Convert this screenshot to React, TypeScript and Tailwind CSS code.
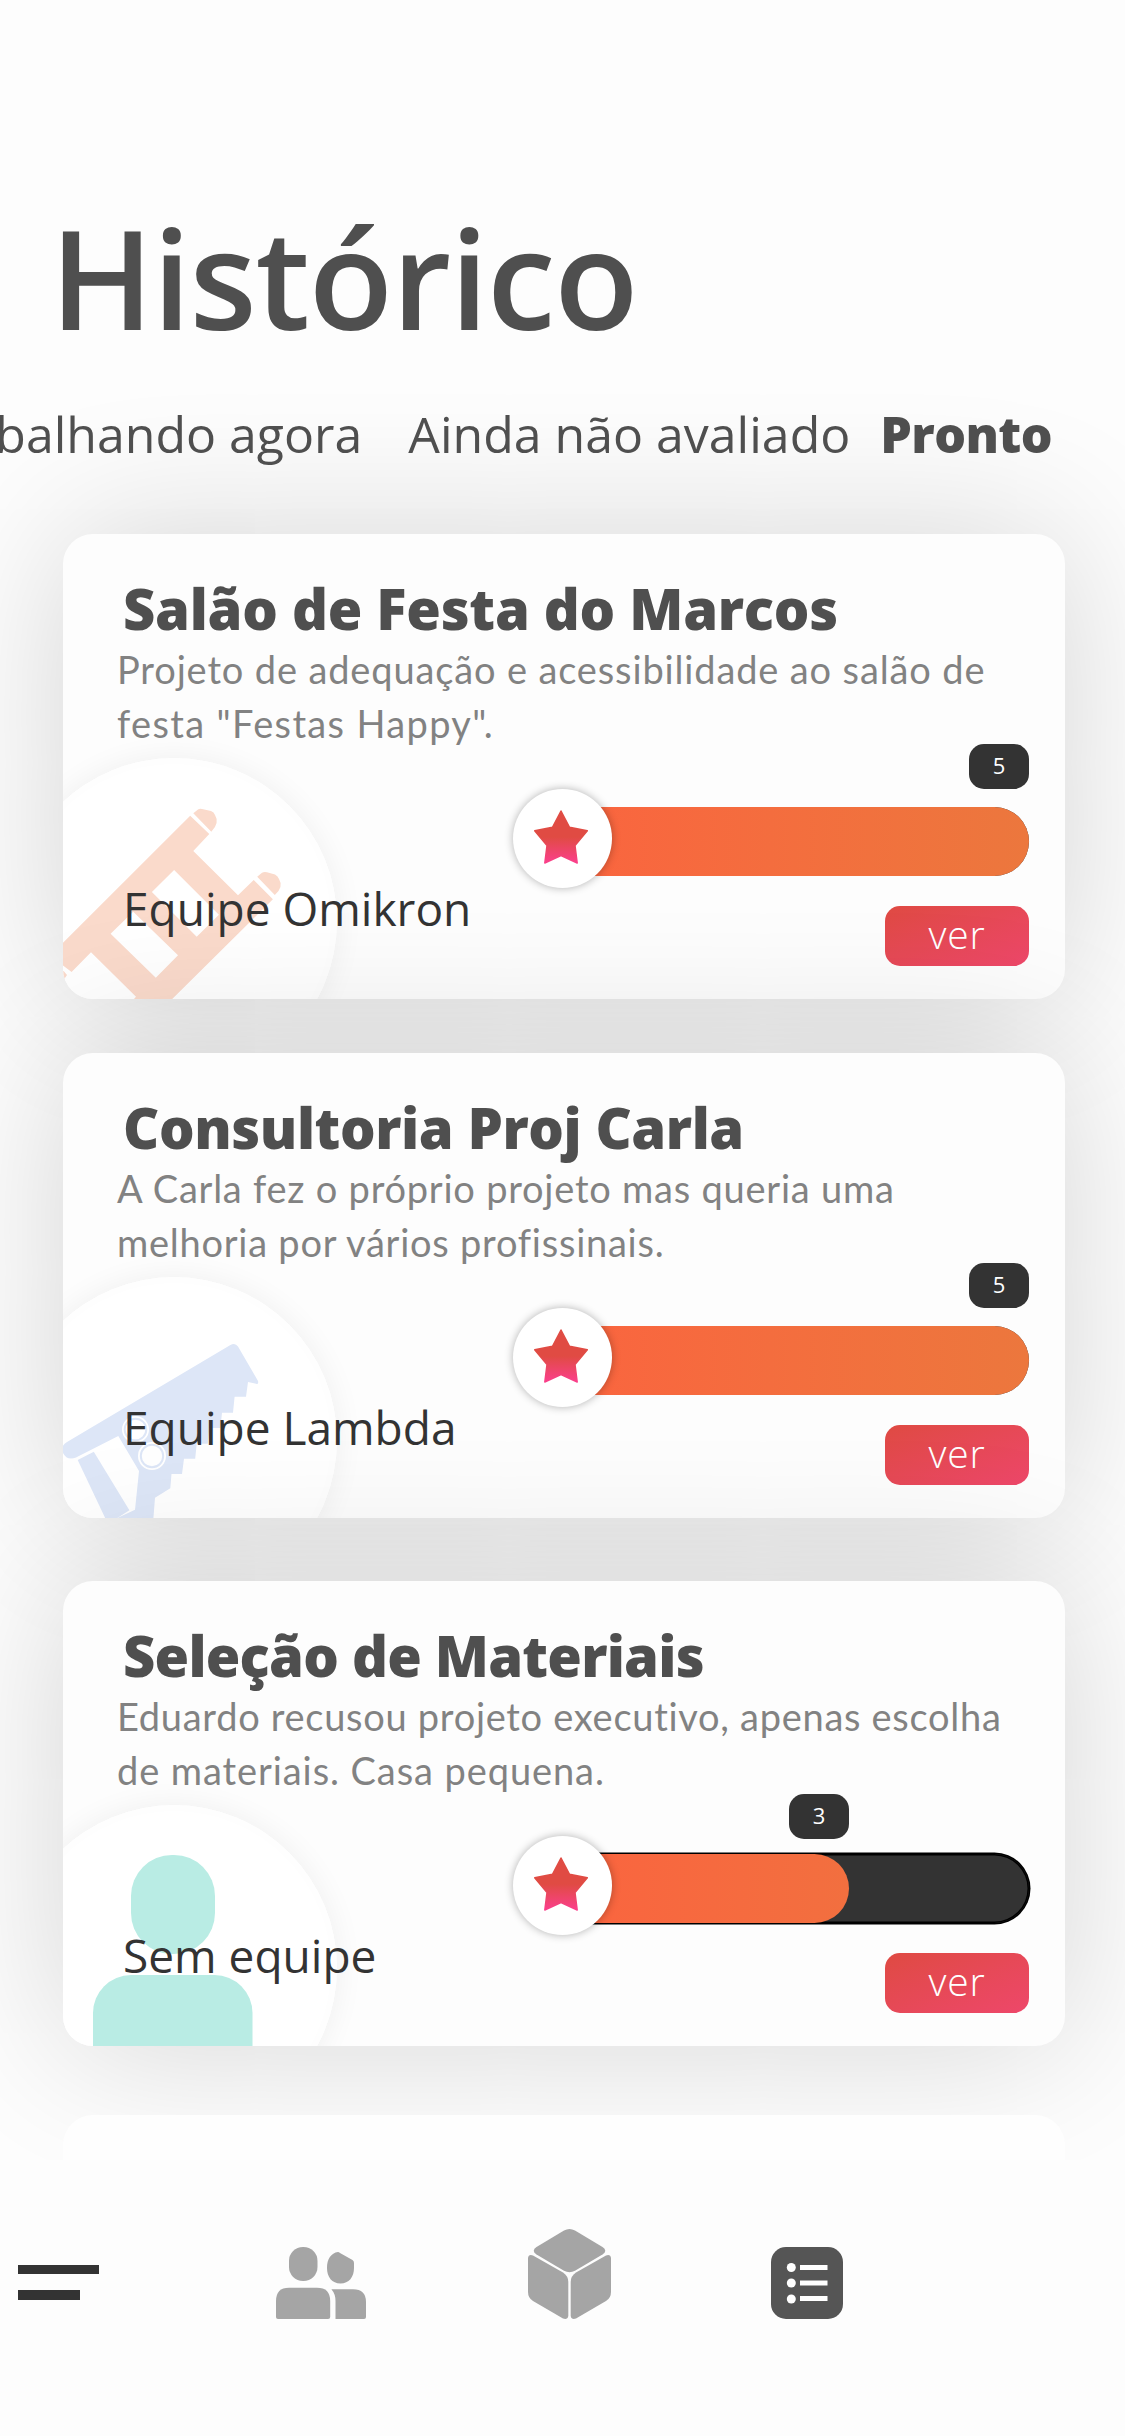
import clsx from 'clsx';
import { ReactNode } from 'react';

type Project = {
	id: number;
	title: string;
	titleStyle: string;
	description: { text: string; style: string }[];
	team: string;
	rating: number;
	icon: ReactNode;
	spacing: string;
};

const Ladder = () => (
	<svg viewBox="11 758 326 326" className="w-full h-full" fill="#fadacb">
		<path
			fillRule="evenodd"
			d="M190.2 815.7L209.3 834L193.3 851L238 895.3L253.7 880L272.9 899.3L151 1020L134 999L136 996.7L91 952.3L71.6 972L50 955.7ZM174.1 870L151.9 892L196.7 936.7L218.9 914.7ZM133.2 911.7L110.6 933.7L155.8 977.7L178 955.3Z"
		/>
		<path d="M193.3 813.3L198 809.500Q199.500 808.500 202 809L211 811Q214 812 215 815Q220 823 211.300 831.700Z" />
		<path d="M257.200 876.700L262 872.700Q264 871.500 267 872.200L275 874.500Q278 876 279 879Q284 887 274.800 895Z" />
		<path d="M50 955L67 975L60 985L40 970Z" />
	</svg>
);

const Saw = () => (
	<svg viewBox="11 1277 326 326" className="w-full h-full" fill="#dde6f7">
		<path d="M230 1345.300Q235 1342 238 1346.500L258 1381Q259 1385 255 1383.500L248 1382L246 1396.700H234.600L233 1412.700H222L220.400 1428H209.300L207.800 1443.700H196.700L195.200 1458.700H184L182 1474H171.500L170.300 1488.300L155 1497.700L152.500 1530H100L111 1521L135 1509.700L139 1471L118.300 1436L76 1457.500Q67 1461 63 1453Q60 1446 67 1442Z" />
		<path d="M77.700 1460L93.800 1451.700L129.400 1510.300L108 1524Z" />
		<g stroke="#dde6f7" strokeWidth="2" fill="#fff">
			<circle cx="135.500" cy="1429.500" r="13.500" stroke="none" />
			<circle cx="135.500" cy="1429.500" r="10.800" />
			<circle cx="152" cy="1456" r="14" stroke="none" />
			<circle cx="152" cy="1456" r="11.200" />
		</g>
	</svg>
);

const Person = () => (
	<svg viewBox="11 1805 326 326" className="w-full h-full" fill="#b9ece4">
		<rect x="131" y="1855" width="84" height="99" rx="41" />
		<rect x="93" y="1975" width="159.500" height="110" rx="38" />
	</svg>
);

const Star = () => (
	<svg viewBox="533 809 56 56" className="w-14 h-14">
		<defs>
			<linearGradient id="star" x1="0" y1="0" x2="0" y2="1">
				<stop offset="0.5" stopColor="#e04b43" />
				<stop offset="1" stopColor="#fb3f8c" />
			</linearGradient>
		</defs>
		<path
			fill="url(#star)"
			stroke="url(#star)"
			strokeWidth="1.500"
			strokeLinejoin="round"
			d="M561 811L569.500 827.300L587.300 830.800L575 845.500L577.200 863L561 855.500L544.800 863L547 845.500L534.700 830.800L552.500 827.300Z"
		/>
	</svg>
);

const projects: Project[] = [
	{
		id: 1,
		title: 'Salão de Festa do Marcos',
		titleStyle: 'tracking-[-0.25px]',
		description: [
			{
				text: 'Projeto de adequação e acessibilidade ao salão de',
				style: 'tracking-[0.86px]',
			},
			{ text: 'festa "Festas Happy".', style: 'tracking-[1.35px]' },
		],
		team: 'Equipe Omikron',
		rating: 5,
		icon: <Ladder />,
		spacing: 'mt-[70px]',
	},
	{
		id: 2,
		title: 'Consultoria Proj Carla',
		titleStyle: 'tracking-[-0.42px]',
		description: [
			{
				text: 'A Carla fez o próprio projeto mas queria uma',
				style: 'tracking-[0.77px]',
			},
			{
				text: 'melhoria por vários profissinais.',
				style: 'tracking-[0.75px]',
			},
		],
		team: 'Equipe Lambda',
		rating: 5,
		icon: <Saw />,
		spacing: 'mt-[54px]',
	},
	{
		id: 3,
		title: 'Seleção de Materiais',
		titleStyle: 'tracking-[-0.76px]',
		description: [
			{
				text: 'Eduardo recusou projeto executivo, apenas escolha',
				style: 'tracking-[0.71px]',
			},
			{ text: 'de materiais. Casa pequena.', style: 'tracking-[0.92px]' },
		],
		team: 'Sem equipe',
		rating: 3,
		icon: <Person />,
		spacing: 'mt-[63px]',
	},
];

const Rating = ({ rating }: { rating: number }) => {
	const full = rating === 5;

	return (
		<div className="relative flex items-center h-[99px]">
			<div
				className={clsx(
					'absolute left-6 top-[18px] h-[69px] right-0 rounded-full bg-[#333]',
					!full && 'ring-[1.5px] ring-black'
				)}
			>
				{!full && (
					<div className="absolute inset-0 rounded-full inset-ring-[1.5px] inset-ring-black" />
				)}
				<div
					className={clsx(
						'relative h-full rounded-full bg-linear-to-r from-[#fb633f]',
						full ? 'w-full to-[#ec773d]' : 'w-[312px] to-[#f26f3f]'
					)}
				/>
			</div>
			<span
				className={clsx(
					'absolute flex items-center justify-center w-[60px] h-[45px] pb-[2px] rounded-[15px] bg-[#333] text-white text-[22px]',
					full ? 'right-0 -top-[45px]' : 'right-[180px] -top-[42px]'
				)}
			>
				{rating}
			</span>
			<div className="relative flex items-center justify-center w-[99px] h-[99px] pr-[3px] pb-1 rounded-full bg-white shadow-[0_0_9px_rgba(0,0,0,0.3)]">
				<Star />
			</div>
		</div>
	);
};

const ProjectCard = ({ item }: { item: Project }) => (
	<article
		className={clsx(
			'relative h-[465px] rounded-[30px] bg-[#fdfdfd] shadow-[0_0_150px_rgba(0,0,0,0.165)]',
			item.spacing
		)}
	>
		<div className="relative h-full overflow-hidden rounded-[30px] pt-11 pr-9">
			<figure className="absolute -left-[52px] top-[224px] w-[326px] h-[326px] rounded-full bg-white shadow-[0_0_30px_rgba(0,0,0,0.06)] inset-ring-[6px] inset-ring-[#fefefe]">
				{item.icon}
			</figure>
			<h2
				className={clsx(
					'pl-[60px] text-[56px] leading-[60px] font-extrabold whitespace-nowrap text-[#4f4f4f]',
					item.titleStyle
				)}
			>
				{item.title}
			</h2>
			<div className="mt-1 pl-[54px] font-['Lato'] text-[38px] leading-[54px] whitespace-nowrap text-[#828282]">
				{item.description.map((line) => (
					<p key={line.text} className={line.style}>
						{line.text}
					</p>
				))}
			</div>
			<div className="relative flex justify-between mt-[39px] pl-[60px]">
				<h3 className="mt-[89px] text-[46px] leading-[60px] whitespace-nowrap text-[#333]">
					{item.team}
				</h3>
				<div className="w-[516px] flex flex-col items-stretch gap-[18px]">
					<Rating rating={item.rating} />
					<button className="self-end w-36 h-[60px] pb-1.5 rounded-[15px] bg-linear-to-br from-[#df4a42] to-[#ee476a] text-white text-[39px] leading-none tracking-[0.8px] font-light">
						ver
					</button>
				</div>
			</div>
		</div>
	</article>
);

const NavBar = () => (
	<nav className="relative h-[276px] bg-[#fdfdfd] flex items-start pl-[18px] pt-[69px]">
		<button className="flex flex-col gap-4 mt-9 w-[81px]">
			<span className="w-[81px] h-[9px] bg-[#333]" />
			<span className="w-[62px] h-[10px] bg-[#333]" />
		</button>
		<button className="ml-[177px] mt-[18px]">
			<svg viewBox="276 2247 90 72" className="w-[90px] h-[72px]" fill="#a5a5a5">
				<rect x="289" y="2247" width="28.500" height="34" rx="14" />
				<path d="M276 2301Q276 2287.700 289 2287.700H317Q330.200 2287.700 330.200 2301V2317Q330.200 2319 328 2319H278Q276 2319 276 2317Z" />
				<path d="M338 2252Q339 2252 340 2253L352.500 2260Q354 2261 354 2263V2268C354 2277 349 2283.500 340.500 2283.500S327 2277 327 2268C327 2259 331 2253 338 2252Z" />
				<path d="M331.400 2289.300H353Q366 2289.300 366 2302V2317Q366 2319 364 2319H335.500V2301Q335.500 2294 331.400 2289.300Z" />
			</svg>
		</button>
		<button className="ml-[162px]">
			<svg viewBox="528 2229 83 90" className="w-[83px] h-[90px]" fill="#a5a5a5">
				<path d="M564 2230.500Q569.500 2227.500 575 2230.500L602.500 2247Q608 2250.700 602.500 2254.500L575 2270.800Q569.500 2273.500 564 2270.800L536.500 2254.500Q531 2250.700 536.500 2247Z" />
				<path d="M528 2258Q528.500 2254 533 2255.500L563 2272.500Q568.300 2276 568.300 2282V2316Q567.500 2320 563 2318.500L533 2301Q528 2298 528 2292Z" />
				<path d="M611 2258Q610.500 2254 606 2255.500L576 2272.500Q570.700 2276 570.700 2282V2316Q571.500 2320 576 2318.500L606 2301Q611 2298 611 2292Z" />
			</svg>
		</button>
		<button className="ml-40 mt-[18px]">
			<svg viewBox="0 0 72 72" className="w-[72px] h-[72px]">
				<rect width="72" height="72" rx="15" fill="#555" />
				<g fill="#fff">
					<circle cx="20.300" cy="20.500" r="4.500" />
					<circle cx="20.300" cy="36" r="4.500" />
					<circle cx="20.300" cy="52" r="4.500" />
					<rect x="29" y="18" width="27.500" height="5" />
					<rect x="29" y="33.500" width="27.500" height="5" />
					<rect x="29" y="49" width="27.500" height="5" />
				</g>
			</svg>
		</button>
	</nav>
);

const App = () => (
	<div className="w-[1125px] h-[2436px] overflow-hidden bg-[#fdfdfd] font-['Open_Sans','Noto_Sans',sans-serif]">
		<main className="h-[2160px] overflow-hidden pt-[207px]">
			<h1 className="relative z-10 pl-[50px] text-[138px] leading-[138px] tracking-[-1.3px] font-semibold text-[#4f4f4f]">
				Histórico
			</h1>
			<ul className="relative z-10 flex justify-end mt-[59px] pr-[73px] text-[50px] leading-[60px] whitespace-nowrap text-[#4f4f4f]">
				<li className="mr-[46px]">Trabalhando agora</li>
				<li className="mr-[30px]">Ainda não avaliado</li>
				<li className="tracking-[-0.6px] font-extrabold">Pronto</li>
			</ul>
			<section className="pl-[63px] pr-[60px]">
				{projects.map((item) => (
					<ProjectCard key={item.id} item={item} />
				))}
				<article className="relative mt-[69px] h-[465px] rounded-[30px] bg-[#fefefe]" />
			</section>
		</main>
		<NavBar />
	</div>
);

export default App;
